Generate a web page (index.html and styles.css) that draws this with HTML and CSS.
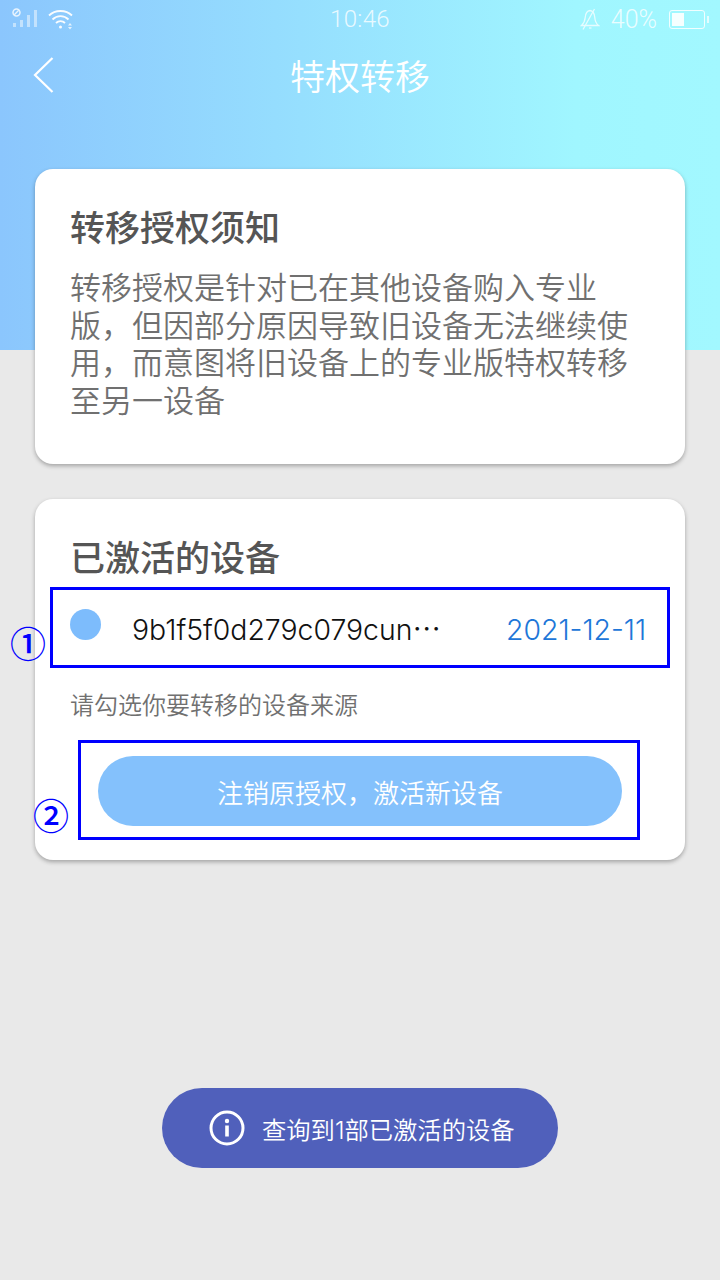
FILE: index.html
```html
<!DOCTYPE html>
<html lang="zh">
<head>
<meta charset="utf-8">
<title>特权转移</title>
<link rel="stylesheet" href="styles.css">
</head>
<body>
<div class="page">
  <header class="status">
    <div class="status-side">
      <svg class="sig" width="27" height="20" viewBox="0 0 27 20" fill="none">
        <circle cx="4.5" cy="4.500" r="3.500" stroke="#fff" stroke-width="1.500"/>
        <path d="M2.300 6.700 6.700 2.300" stroke="#fff" stroke-width="1.300"/>
        <rect x="1" y="15" width="3" height="4" fill="#fff" fill-opacity=".6"/>
        <rect x="8" y="12" width="3" height="7" fill="#fff" fill-opacity=".6"/>
        <rect x="15" y="7" width="3" height="12" fill="#fff" fill-opacity=".6"/>
        <rect x="22" y="2" width="3" height="17" fill="#fff" fill-opacity=".6"/>
      </svg>
      <svg class="wifi" width="26" height="22" viewBox="0 0 26 22" fill="none" stroke="#fff" stroke-width="1.800">
        <path d="M1 7.500C7 1.500 18 1.500 24 7.500"/>
        <path d="M4.500 11.500C9 7 16 7 20.500 11.500"/>
        <path d="M8 15C10.500 12.500 14.500 12.500 17 15"/>
        <circle cx="12.500" cy="19" r="1.500" fill="#fff" stroke="none"/>
        <path d="M20 17.500h4l-2-2.500zM20 19h4l-2 2.500z" fill="#fff" fill-opacity=".8" stroke="none"/>
      </svg>
    </div>
    <div class="clock">10:46</div>
    <div class="status-side status-right">
      <svg class="bell" width="20" height="22" viewBox="0 0 20 22" fill="none" stroke="#fff" stroke-width="1.300">
        <path d="M10 2.500C6.500 3 5.500 6 5.200 9.500 5 12.500 4 15 1.500 17.500H18.500C16 15.500 15 12.500 14.800 9.500 14.500 6 13.500 3 10 2.500Z"/>
        <path d="M14.500 1 3 21.500"/>
        <path d="M9 20h2.500"/>
      </svg>
      <span class="pct">40%</span>
      <div class="battery"><div class="battery-fill" style="width:40%"></div></div>
      <div class="battery-tip"></div>
    </div>
  </header>

  <nav class="nav">
    <svg class="back" width="22" height="38" viewBox="0 0 22 38" fill="none">
      <path d="M19.500 2 2 19 19.500 36" stroke="#fff" stroke-width="2.200"/>
    </svg>
    <h1 class="nav-title">特权转移</h1>
  </nav>

  <main class="cards">
    <section class="card notice">
      <h2 class="card-title">转移授权须知</h2>
      <p class="notice-body">转移授权是针对已在其他设备购入专业版，但因部分原因导致旧设备无法继续使用，而意图将旧设备上的专业版特权转移至另一设备</p>
    </section>

    <section class="card devices">
      <h2 class="card-title">已激活的设备</h2>
      <div class="device-row">
        <span class="dot"></span>
        <span class="device-id">9b1f5f0d279c079cun⋯</span>
        <span class="device-date">2021-12-11</span>
      </div>
      <p class="hint">请勾选你要转移的设备来源</p>
      <div class="action">
        <button class="action-btn">注销原授权，激活新设备</button>
      </div>
      <span class="marker marker-one">①</span>
      <span class="marker marker-two">②</span>
    </section>
  </main>

  <div class="toast">
    <svg width="36" height="36" viewBox="0 0 36 36" fill="none">
      <circle cx="18" cy="18" r="16" stroke="#fff" stroke-width="3"/>
      <circle cx="18" cy="11" r="2.200" fill="#fff"/>
      <rect x="16.200" y="15.500" width="3.600" height="11" fill="#fff"/>
    </svg>
    <span>查询到1部已激活的设备</span>
  </div>
</div>
</body>
</html>
```

FILE: styles.css
```css
* { box-sizing: border-box; }
html, body { margin: 0; padding: 0; }
body {
  font-family: "Inter", "Noto Sans CJK SC", "Noto Sans", sans-serif;
}
.page {
  position: relative;
  width: 720px;
  height: 1280px;
  overflow: hidden;
  background-color: #e9e9e9;
  background-image: linear-gradient(90deg, #8bc6fd 0%, #a0f6ff 80%, #a2f8ff 100%);
  background-size: 100% 350px;
  background-repeat: no-repeat;
}
.status {
  height: 40px;
  display: grid;
  grid-template-columns: 1fr auto 1fr;
  align-items: center;
  padding: 0 12px;
}
.status-side { display: flex; align-items: center; gap: 9px; }
.status-right { justify-content: flex-end; gap: 0; }
.sig { opacity: .8; margin-top: -4px; }
.wifi { opacity: .95; margin-top: -3px; }
.clock {
  font-family: "Roboto", sans-serif;
  font-size: 24px;
  font-weight: 300;
  letter-spacing: .3px;
  color: rgba(255,255,255,.8);
  margin-top: -2px;
}
.bell { opacity: .75; margin-right: 11px; margin-top: -2px; }
.pct {
  font-family: "Roboto", sans-serif;
  font-size: 25px;
  font-weight: 300;
  color: rgba(255,255,255,.8);
  margin-right: 12px;
  margin-top: -2px;
}
.battery {
  width: 36px;
  height: 19px;
  border: 1px solid rgba(255,255,255,.85);
  border-radius: 3px;
  padding: 2px;
  margin-top: -2px;
}
.battery-fill { height: 100%; background: rgba(255,255,255,.9); }
.battery-tip {
  width: 2px;
  height: 7px;
  margin-left: 2px;
  margin-right: -1px;
  margin-top: -2px;
  background: rgba(255,255,255,.7);
}
.nav {
  height: 70px;
  display: flex;
  align-items: center;
  justify-content: center;
  position: relative;
}
.back { position: absolute; left: 33px; top: 16px; }
.nav-title {
  margin: -2px 0 0;
  font-size: 35px;
  font-weight: 350;
  color: #fff;
}
.cards {
  padding: 59px 35px 0;
  display: flex;
  flex-direction: column;
  gap: 35px;
}
.card {
  position: relative;
  background: #fff;
  border-radius: 18px;
  box-shadow: 0 2px 4px rgba(0,0,0,.3);
  padding: 0 35px;
}
.notice { height: 295px; }
.devices { height: 361px; }
.card-title {
  margin: 0;
  font-size: 35px;
  font-weight: 500;
  line-height: 50px;
  color: #555;
}
.notice .card-title { padding-top: 34px; height: 84px; }
.notice-body {
  margin: 16px 0 0;
  font-size: 31px;
  font-weight: 350;
  line-height: 37.500px;
  color: #707070;
  width: 560px;
}
.devices .card-title { padding-top: 34px; height: 84px; }
.device-row {
  position: relative;
  margin: 4px 0 0 -20px;
  width: 620px;
  height: 81px;
  border: 3px solid #0000ff;
  display: flex;
  align-items: center;
  padding-left: 17px;
}
.dot {
  width: 31px;
  height: 31px;
  border-radius: 50%;
  background: #7dbcfc;
  margin-top: -6px;
  flex: none;
}
.device-id {
  margin-left: 31px;
  font-size: 28.400px;
  font-weight: 350;
  color: #111;
  width: 374px;
  flex: none;
  white-space: nowrap;
}
.device-date {
  font-size: 28.400px;
  font-weight: 300;
  color: #2076d8;
  margin-top: 4px;
}
.hint {
  margin: 23px 0 0;
  font-size: 24px;
  font-weight: 350;
  line-height: 30px;
  color: #707070;
}
.action {
  margin: 19px 0 0 8px;
  width: 562px;
  height: 100px;
  border: 3px solid #0000ff;
  padding: 13px 17px;
}
.action-btn {
  display: block;
  width: 524px;
  height: 70px;
  border: 0;
  padding: 0;
  border-radius: 35px;
  background: #84c1fc;
  color: #fff;
  font: inherit;
  font-size: 26px;
  font-weight: 350;
}
.marker {
  position: absolute;
  font-family: "Noto Sans CJK SC", sans-serif;
  font-size: 36px;
  line-height: 36px;
  font-weight: 500;
  color: #0000ff;
}
.marker-one { left: -25px; top: 125px; }
.marker-two { left: -2px; top: 297px; }
.toast {
  position: absolute;
  left: 162px;
  top: 1088px;
  width: 396px;
  height: 80px;
  border-radius: 40px;
  background: #5060bb;
  color: #fff;
  font-size: 24.300px;
  font-weight: 350;
  display: flex;
  align-items: center;
  gap: 17px;
  padding-left: 47px;
}
```
